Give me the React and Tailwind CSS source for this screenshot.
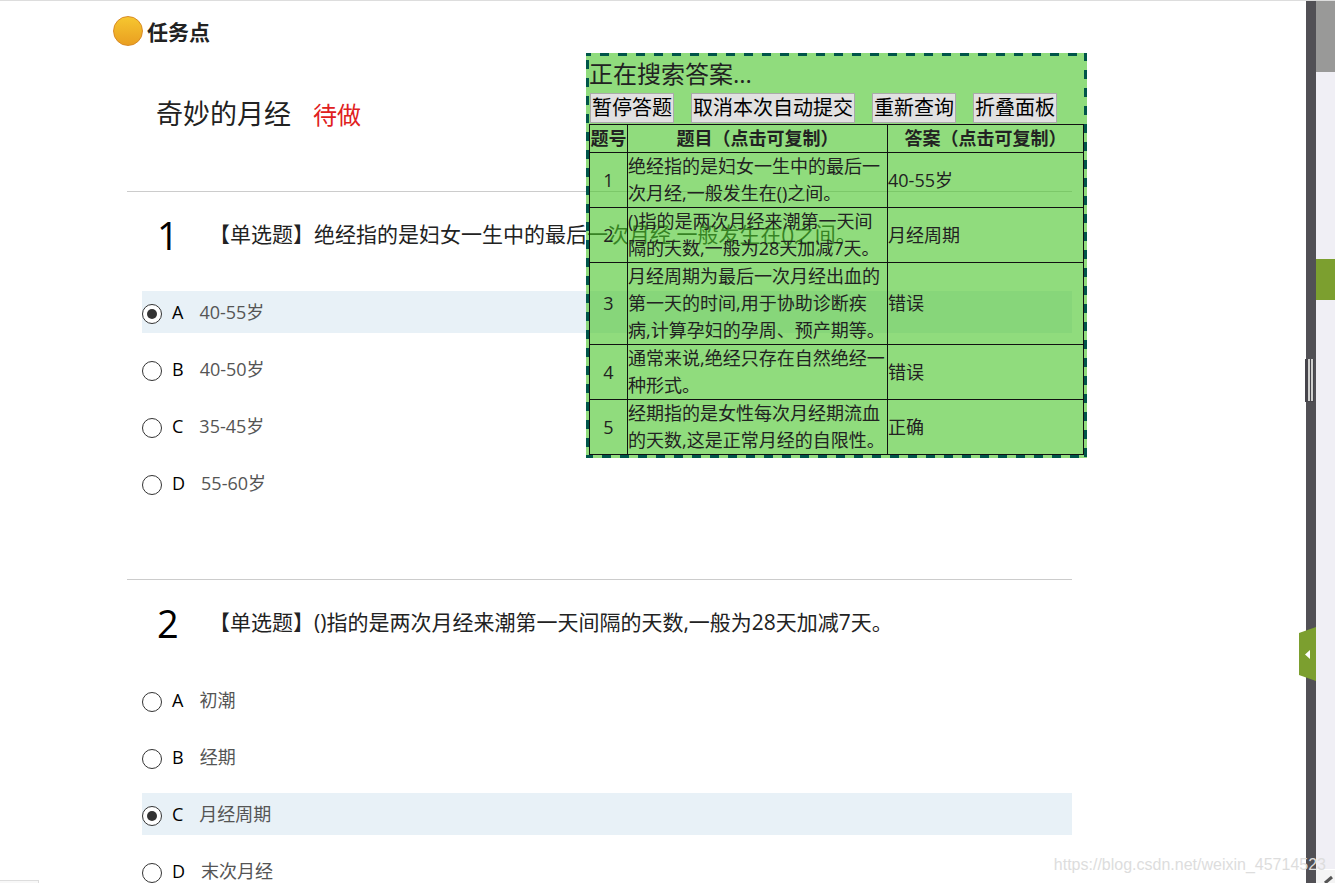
import React, { useState } from "react";
import clsx from "clsx";

const questions = [
  {
    id: 1,
    title: "【单选题】绝经指的是妇女一生中的最后一次月经,一般发生在()之间。",
    options: ["40-55岁", "40-50岁", "35-45岁", "55-60岁"],
    answer: 0,
  },
  {
    id: 2,
    title: "【单选题】()指的是两次月经来潮第一天间隔的天数,一般为28天加减7天。",
    options: ["初潮", "经期", "月经周期", "末次月经"],
    answer: 2,
  },
];

const results = [
  { question: "绝经指的是妇女一生中的最后一次月经,一般发生在()之间。", answer: "40-55岁" },
  { question: "()指的是两次月经来潮第一天间隔的天数,一般为28天加减7天。", answer: "月经周期" },
  {
    question: "月经周期为最后一次月经出血的第一天的时间,用于协助诊断疾病,计算孕妇的孕周、预产期等。",
    answer: "错误",
  },
  { question: "通常来说,绝经只存在自然绝经一种形式。", answer: "错误" },
  { question: "经期指的是女性每次月经期流血的天数,这是正常月经的自限性。", answer: "正确" },
];

const actions = ["暂停答题", "取消本次自动提交", "重新查询", "折叠面板"];

const Question = ({ question }) => {
  const [selected, setSelected] = useState(question.answer);

  return (
    <section className="border-t border-[#ccc] pt-4 pb-[75px]">
      <div className="mb-[29px] flex h-[54px] items-center">
        <span className="w-[82px] shrink-0 pl-[30px] text-[38px] text-black">{question.id}</span>
        <h2 className="whitespace-nowrap text-[21px] text-[#222]">{question.title}</h2>
      </div>
      <div className="ml-[15px] flex flex-col gap-[15px]">
        {question.options.map((text, i) => (
          <label
            key={text}
            className={clsx("flex h-[42px] items-center text-lg", selected === i && "bg-[#e8f1f7]")}
          >
            <input
              type="radio"
              name={`question-${question.id}`}
              checked={selected === i}
              onChange={() => setSelected(i)}
              className="mt-1 mr-2.5 grid size-5 shrink-0 appearance-none place-content-center rounded-full border border-[#333] bg-white before:size-2.5 before:rounded-full checked:before:bg-[#333]"
            />
            <span className="mr-4 text-black">{"ABCD"[i]}</span>
            <span className="text-[#555]">{text}</span>
          </label>
        ))}
      </div>
    </section>
  );
};

const AnswerPanel = () => (
  <aside className="absolute top-[52px] left-[586px] w-[501px] bg-[#46c526]/60 p-[3px] text-[#222]">
    {/* dashed frame */}
    <svg className="pointer-events-none absolute inset-0 size-full" fill="none" stroke="#00564a">
      <rect width="100%" height="100%" strokeWidth="6" strokeDasharray="9 9" strokeDashoffset="4" />
    </svg>
    <p className="text-2xl leading-9">正在搜索答案...</p>
    <div className="flex h-8 items-center gap-[17px] pl-px">
      {actions.map((label) => (
        <button
          key={label}
          type="button"
          className="h-[30px] border border-[#aaa] bg-[#e1e1e1] px-px text-xl leading-7 whitespace-nowrap text-black"
        >
          {label}
        </button>
      ))}
    </div>
    <table className="w-full table-fixed border-collapse text-lg leading-[27px] [&_td]:border [&_td]:border-[#111] [&_td]:p-0 [&_th]:border [&_th]:border-[#111] [&_th]:p-0">
      <thead>
        <tr>
          <th className="w-[38px]">题号</th>
          <th className="w-[260px]">题目（点击可复制）</th>
          <th>答案（点击可复制）</th>
        </tr>
      </thead>
      <tbody>
        {results.map((item, i) => (
          <tr key={item.question}>
            <td className="text-center">{i + 1}</td>
            <td>{item.question}</td>
            <td>{item.answer}</td>
          </tr>
        ))}
      </tbody>
    </table>
  </aside>
);

const Rail = () => (
  <div className="relative flex shrink-0">
    <div className="w-2.5 bg-[#515055]" />
    <div className="flex w-[19px] flex-col bg-[#f0eff5]">
      <div className="h-[71px] bg-[#999998]" />
      <div className="mt-[187px] h-[41px] bg-[#7c9f2f]" />
      <div className="mt-auto h-3.5 border-t border-white bg-[#f4f4f4]">
        <svg viewBox="0 0 19 13" className="h-[13px] w-[19px]">
          <path d="M16 7 L9 13" stroke="#555" strokeWidth="3" />
        </svg>
      </div>
    </div>
    {/* splitter grip */}
    <svg viewBox="0 0 9 43" className="absolute top-[358px] -left-px h-[43px] w-[9px]">
      <rect width="9" height="43" fill="#46454b" />
      <rect x="3" width="2" height="42" fill="#d0d0ce" />
      <rect x="6" width="2" height="42" fill="#d0d0ce" />
    </svg>
    {/* collapse tab */}
    <button type="button" aria-label="展开" className="absolute top-[626px] -left-[7px]">
      <svg viewBox="0 0 17 54" className="h-[54px] w-[17px]">
        <path d="M0 6 L17 0 V54 L0 48 Z" fill="#7c9f2f" />
        <path d="M11 23 V32 L6 27.5 Z" fill="#fff" />
      </svg>
    </button>
  </div>
);

export default function App() {
  return (
    <div className="relative flex h-screen overflow-hidden border-t border-[#ddd] bg-white font-['Open_Sans','Noto_Sans_CJK_SC',sans-serif]">
      <main className="min-w-0 flex-1 overflow-hidden pt-[15px]">
        <div className="ml-[113px] flex h-[30px] items-center gap-1">
          <span className="size-[30px] rounded-full border border-[#d98b25] bg-linear-to-b from-[#f6c62f] to-[#e99f21]" />
          <span className="pt-1 text-[21px] font-bold text-[#222]">任务点</span>
        </div>
        <div className="mr-[234px] ml-[127px]">
          <header className="flex h-[145px] items-center gap-[22px] pb-2 pl-[29px]">
            <h1 className="text-[27px] text-[#222]">奇妙的月经</h1>
            <span className="text-2xl text-[#e02020]">待做</span>
          </header>
          {questions.map((question) => (
            <Question key={question.id} question={question} />
          ))}
        </div>
      </main>
      <Rail />
      <AnswerPanel />
      <span className="absolute right-[9px] bottom-1.5 font-['Liberation_Sans',sans-serif] text-base text-[#ddd]">
        https://blog.csdn.net/weixin_45714523
      </span>
      <div className="absolute bottom-0 left-0 h-[3px] w-[39px] border-t border-r border-[#ddd] bg-[#f8f8f8]" />
    </div>
  );
}
